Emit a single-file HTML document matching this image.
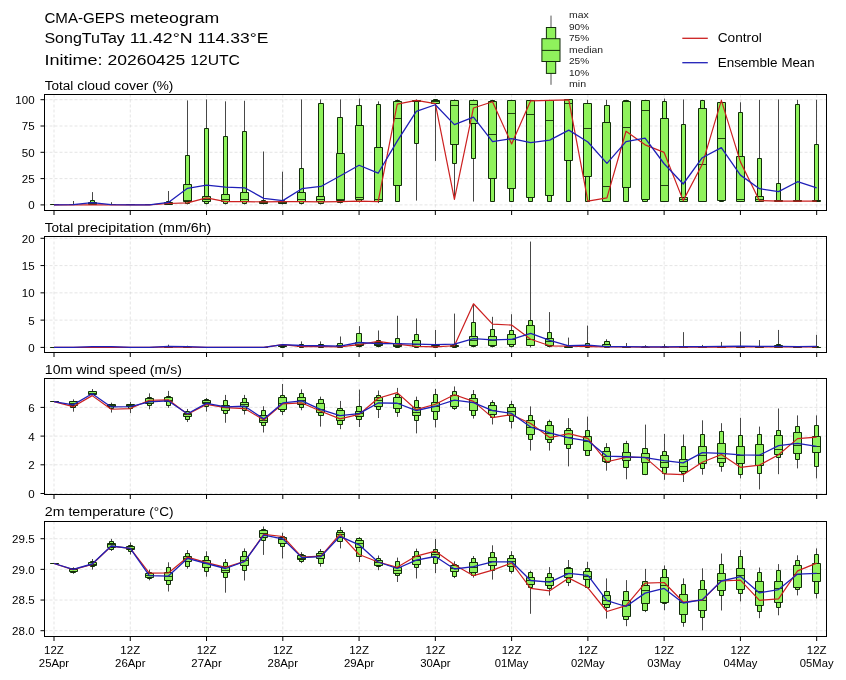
<!DOCTYPE html>
<html><head><meta charset="utf-8"><style>
html,body{margin:0;padding:0;background:#fff;width:846px;height:680px;overflow:hidden}
svg{display:block;font-family:'Liberation Sans', sans-serif;will-change:transform}
</style></head><body>
<svg width="846" height="680" viewBox="0 0 846 680">
<rect width="846" height="680" fill="#fff"/>
<text x="44.4" y="22.6" font-size="15.3" textLength="80.55" lengthAdjust="spacingAndGlyphs" fill="#000">CMA-GEPS</text><text x="129.82" y="22.6" font-size="15.3" textLength="89.37" lengthAdjust="spacingAndGlyphs" fill="#000">meteogram</text>
<text x="44.4" y="43.3" font-size="15.3" textLength="80.45" lengthAdjust="spacingAndGlyphs" fill="#000">SongTuTay</text><text x="129.71" y="43.3" font-size="15.3" textLength="62.9" lengthAdjust="spacingAndGlyphs" fill="#000">11.42°N</text><text x="197.47" y="43.3" font-size="15.3" textLength="70.85" lengthAdjust="spacingAndGlyphs" fill="#000">114.33°E</text>
<text x="44.4" y="64.6" font-size="15.3" textLength="58.18" lengthAdjust="spacingAndGlyphs" fill="#000">Initime:</text><text x="107.44" y="64.6" font-size="15.3" textLength="77.88" lengthAdjust="spacingAndGlyphs" fill="#000">20260425</text><text x="190.18" y="64.6" font-size="15.3" textLength="49.8" lengthAdjust="spacingAndGlyphs" fill="#000">12UTC</text>
<line x1="551.0" y1="15.6" x2="551.0" y2="84.8" stroke="#555" stroke-width="1"/>
<rect x="546.4" y="27.5" width="9.3" height="45.9" fill="#8ff25c" stroke="#122d0a" stroke-width="1"/>
<rect x="541.9" y="38.7" width="18.1" height="22.8" fill="#8ff25c" stroke="#122d0a" stroke-width="1"/>
<line x1="541.9" y1="50.4" x2="560" y2="50.4" stroke="#122d0a" stroke-width="1"/>
<text x="569" y="18" font-size="9.61" textLength="19.76" lengthAdjust="spacingAndGlyphs" fill="#222">max</text>
<text x="569" y="29.5" font-size="9.61" textLength="20.16" lengthAdjust="spacingAndGlyphs" fill="#222">90%</text>
<text x="569" y="41" font-size="9.61" textLength="20.16" lengthAdjust="spacingAndGlyphs" fill="#222">75%</text>
<text x="569" y="52.5" font-size="9.61" textLength="34" lengthAdjust="spacingAndGlyphs" fill="#222">median</text>
<text x="569" y="64" font-size="9.61" textLength="20.16" lengthAdjust="spacingAndGlyphs" fill="#222">25%</text>
<text x="569" y="75.5" font-size="9.61" textLength="20.16" lengthAdjust="spacingAndGlyphs" fill="#222">10%</text>
<text x="569" y="87" font-size="9.61" textLength="17.1" lengthAdjust="spacingAndGlyphs" fill="#222">min</text>
<line x1="682.3" y1="38.3" x2="707.8" y2="38.3" stroke="#cc2020" stroke-width="1.3"/>
<line x1="682.3" y1="62.7" x2="707.8" y2="62.7" stroke="#1f1fb8" stroke-width="1.3"/>
<text x="717.7" y="42.3" font-size="12.93" textLength="44.1" lengthAdjust="spacingAndGlyphs" fill="#000">Control</text>
<text x="717.7" y="66.7" font-size="12.93" textLength="59.83" lengthAdjust="spacingAndGlyphs" fill="#000">Ensemble</text><text x="781.4" y="66.7" font-size="12.93" textLength="33.24" lengthAdjust="spacingAndGlyphs" fill="#000">Mean</text>
<text x="44.8" y="89.5" font-size="12.61" textLength="28.59" lengthAdjust="spacingAndGlyphs" fill="#000">Total</text><text x="77.28" y="89.5" font-size="12.61" textLength="33.15" lengthAdjust="spacingAndGlyphs" fill="#000">cloud</text><text x="114.31" y="89.5" font-size="12.61" textLength="34.03" lengthAdjust="spacingAndGlyphs" fill="#000">cover</text><text x="152.23" y="89.5" font-size="12.61" textLength="21.18" lengthAdjust="spacingAndGlyphs" fill="#000">(%)</text>
<path d="M54 94.5V210.5M130.27 94.5V210.5M206.54 94.5V210.5M282.8 94.5V210.5M359.07 94.5V210.5M435.34 94.5V210.5M511.61 94.5V210.5M587.88 94.5V210.5M664.14 94.5V210.5M740.41 94.5V210.5M816.68 94.5V210.5M44.5 204.9H826.5M44.5 178.6H826.5M44.5 152.3H826.5M44.5 126H826.5M44.5 99.7H826.5" stroke="#c4c4c4" stroke-width="0.6" stroke-dasharray="3,2" fill="none" opacity="0.75"/>
<path d="M73.5 201V204.9M92.5 192.1V204.9M111.5 202.2V204.9M168.5 191V204.9M187.5 100.4V204.42M206.5 99.46V204.42M225.5 101.35V204.42M244.5 100.78V204.42M263.5 151.47V204.42M282.5 171.7V204.42M301.5 99.46V204.42M320.5 99.46V204.42M340.5 99.46V203.48M359.5 98.51V202.53M378.5 101.35V203.1M397.5 99.46V201.96M416.5 99.46V200.64M435.5 99.46V160.92M454.5 99.46V199.31M473.5 99.46V201.58M492.5 99.83V201.96M511.5 99.83V201.96M530.5 99.83V201.96M549.5 99.83V201.96M568.5 99.83V201.96M587.5 99.83V201.96M606.5 99.83V201.96M626.5 99.83V201.96M645.5 99.83V201.96M664.5 98.51V201.96M683.5 99.46V201.96M702.5 99.83V201.96M721.5 99.83V201.96M740.5 102.29V201.96M759.5 99.83V201.96M778.5 99.46V201.96M797.5 99.83V201.96M816.5 99.83V201.96" stroke="#333" stroke-width="0.9" fill="none"/>
<path d="M51.5 204.5H56.5V204.5H51.5zM70.5 204.5H75.5V204.5H70.5zM90.5 200.5H94.5V204.5H90.5zM109.5 204.5H113.5V204.5H109.5zM128.5 204.5H132.5V204.5H128.5zM147.5 204.5H151.5V204.5H147.5zM166.5 201.5H170.5V204.5H166.5zM185.5 155.5H189.5V203.5H185.5zM204.5 128.5H208.5V203.5H204.5zM223.5 136.5H227.5V203.5H223.5zM242.5 131.5H246.5V203.5H242.5zM261.5 200.5H265.5V203.5H261.5zM280.5 200.5H284.5V203.5H280.5zM299.5 168.5H303.5V203.5H299.5zM318.5 103.5H323.5V203.5H318.5zM337.5 117.5H342.5V202.5H337.5zM356.5 105.5H361.5V201.5H356.5zM376.5 104.5H380.5V201.5H376.5zM395.5 100.5H399.5V201.5H395.5zM414.5 100.5H418.5V143.5H414.5zM433.5 99.5H437.5V103.5H433.5zM452.5 100.5H456.5V163.5H452.5zM471.5 100.5H475.5V158.5H471.5zM490.5 100.5H494.5V201.5H490.5zM509.5 100.5H513.5V201.5H509.5zM528.5 100.5H532.5V201.5H528.5zM547.5 100.5H551.5V201.5H547.5zM566.5 99.5H570.5V201.5H566.5zM585.5 103.5H589.5V201.5H585.5zM604.5 105.5H609.5V201.5H604.5zM623.5 100.5H628.5V201.5H623.5zM642.5 100.5H647.5V201.5H642.5zM662.5 101.5H666.5V201.5H662.5zM681.5 124.5H685.5V201.5H681.5zM700.5 100.5H704.5V201.5H700.5zM719.5 102.5H723.5V201.5H719.5zM738.5 112.5H742.5V201.5H738.5zM757.5 158.5H761.5V201.5H757.5zM776.5 183.5H780.5V201.5H776.5zM795.5 104.5H799.5V201.5H795.5zM814.5 144.5H818.5V201.5H814.5z" fill="#8ff25c" stroke="#122d0a" stroke-width="1"/>
<path d="M50.5 204.5H58.5V204.5H50.5zM69.5 204.5H77.5V204.5H69.5zM88.5 202.5H96.5V204.5H88.5zM107.5 204.5H115.5V204.5H107.5zM126.5 204.5H134.5V204.5H126.5zM145.5 204.5H153.5V204.5H145.5zM164.5 202.5H172.5V204.5H164.5zM183.5 184.5H191.5V201.5H183.5zM202.5 196.5H210.5V201.5H202.5zM221.5 194.5H229.5V201.5H221.5zM240.5 192.5H248.5V201.5H240.5zM259.5 201.5H267.5V203.5H259.5zM278.5 201.5H286.5V203.5H278.5zM297.5 192.5H305.5V201.5H297.5zM316.5 196.5H324.5V201.5H316.5zM336.5 153.5H344.5V200.5H336.5zM355.5 125.5H363.5V199.5H355.5zM374.5 147.5H382.5V201.5H374.5zM393.5 101.5H401.5V185.5H393.5zM412.5 100.5H420.5V101.5H412.5zM431.5 100.5H439.5V103.5H431.5zM450.5 100.5H458.5V144.5H450.5zM469.5 100.5H477.5V123.5H469.5zM488.5 101.5H496.5V178.5H488.5zM507.5 100.5H515.5V188.5H507.5zM526.5 100.5H534.5V197.5H526.5zM545.5 100.5H553.5V195.5H545.5zM564.5 99.5H572.5V160.5H564.5zM583.5 103.5H591.5V176.5H583.5zM602.5 122.5H610.5V201.5H602.5zM622.5 101.5H630.5V187.5H622.5zM641.5 100.5H649.5V199.5H641.5zM660.5 118.5H668.5V201.5H660.5zM679.5 197.5H687.5V201.5H679.5zM698.5 108.5H706.5V201.5H698.5zM717.5 102.5H725.5V200.5H717.5zM736.5 156.5H744.5V201.5H736.5zM755.5 196.5H763.5V201.5H755.5zM774.5 200.5H782.5V201.5H774.5zM793.5 200.5H801.5V201.5H793.5zM812.5 200.5H820.5V201.5H812.5z" fill="#8ff25c" stroke="#122d0a" stroke-width="1"/>
<path d="M50.5 204.5H58.5M69.5 204.5H77.5M88.5 203.5H96.5M107.5 204.5H115.5M126.5 204.5H134.5M145.5 204.5H153.5M164.5 203.5H172.5M183.5 200.5H191.5M202.5 199.5H210.5M221.5 199.5H229.5M240.5 199.5H248.5M259.5 202.5H267.5M278.5 202.5H286.5M297.5 199.5H305.5M316.5 199.5H324.5M336.5 199.5H344.5M355.5 197.5H363.5M374.5 199.5H382.5M393.5 118.5H401.5M412.5 101.5H420.5M431.5 101.5H439.5M450.5 105.5H458.5M469.5 104.5H477.5M488.5 134.5H496.5M507.5 113.5H515.5M526.5 114.5H534.5M545.5 120.5H553.5M564.5 103.5H572.5M583.5 128.5H591.5M602.5 186.5H610.5M622.5 127.5H630.5M641.5 110.5H649.5M660.5 185.5H668.5M679.5 199.5H687.5M698.5 164.5H706.5M717.5 138.5H725.5M736.5 199.5H744.5M755.5 199.5H763.5M774.5 200.5H782.5M793.5 200.5H801.5M812.5 200.5H820.5" stroke="#122d0a" stroke-width="0.9" fill="none"/>
<path d="M54 204.9L73.07 204.9L92.13 204.9L111.2 204.9L130.27 204.9L149.34 204.9L168.4 203.5L187.47 202.91L206.54 197.8L225.6 201.58L244.67 201.58L263.74 201.96L282.8 201.58L301.87 201.58L320.94 201.96L340 201.58L359.07 201.21L378.14 201.58L397.21 104.18L416.27 100.4L435.34 103.62L454.41 199.31L473.47 107.97L492.54 101.73L511.61 143.9L530.67 100.78L549.74 100.4L568.81 99.83L587.88 201.21L606.94 197.8L626.01 131.23L645.08 144.85L664.14 152.41L683.21 200.64L702.28 164.33L721.35 100.4L740.41 161.87L759.48 200.64L778.55 201.21L797.61 201.21L816.68 201.21" stroke="#cc2020" stroke-width="1.2" fill="none" stroke-linejoin="round"/>
<path d="M54 204.9L73.07 204.6L92.13 202.7L111.2 204.6L130.27 204.9L149.34 204.9L168.4 202.4L187.47 188.35L206.54 185.13L225.6 187.21L244.67 187.78L263.74 198.37L282.8 200.64L301.87 188.72L320.94 186.45L340 176.05L359.07 165.27L378.14 173.22L397.21 141.06L416.27 111.37L435.34 104.75L454.41 124.61L473.47 117.04L492.54 141.63L511.61 138.61L530.67 142.58L549.74 140.12L568.81 130.09L587.88 142.01L606.94 163.38L626.01 141.63L645.08 138.23L664.14 163.76L683.21 184L702.28 157.71L721.35 147.68L740.41 175.11L759.48 188.72L778.55 191.56L797.61 181.73L816.68 187.78" stroke="#1f1fb8" stroke-width="1.3" fill="none" stroke-linejoin="round"/>
<rect x="44.5" y="94.5" width="782" height="116" fill="none" stroke="#000" stroke-width="1"/>
<path d="M40.5 204.9H44.5M40.5 178.6H44.5M40.5 152.3H44.5M40.5 126H44.5M40.5 99.7H44.5M54 210.5v4.5M130.27 210.5v4.5M206.54 210.5v4.5M282.8 210.5v4.5M359.07 210.5v4.5M435.34 210.5v4.5M511.61 210.5v4.5M587.88 210.5v4.5M664.14 210.5v4.5M740.41 210.5v4.5M816.68 210.5v4.5" stroke="#000" stroke-width="1" fill="none"/>
<text x="28.17" y="209.3" font-size="10.71" textLength="6.43" lengthAdjust="spacingAndGlyphs" fill="#000">0</text>
<text x="21.75" y="183" font-size="10.71" textLength="12.85" lengthAdjust="spacingAndGlyphs" fill="#000">25</text>
<text x="21.75" y="156.7" font-size="10.71" textLength="12.85" lengthAdjust="spacingAndGlyphs" fill="#000">50</text>
<text x="21.75" y="130.4" font-size="10.71" textLength="12.85" lengthAdjust="spacingAndGlyphs" fill="#000">75</text>
<text x="15.32" y="104.1" font-size="10.71" textLength="19.28" lengthAdjust="spacingAndGlyphs" fill="#000">100</text>
<text x="44.8" y="231.8" font-size="12.61" textLength="28.59" lengthAdjust="spacingAndGlyphs" fill="#000">Total</text><text x="77.28" y="231.8" font-size="12.61" textLength="77.11" lengthAdjust="spacingAndGlyphs" fill="#000">precipitation</text><text x="158.28" y="231.8" font-size="12.61" textLength="53.06" lengthAdjust="spacingAndGlyphs" fill="#000">(mm/6h)</text>
<path d="M54 236.5V352.5M130.27 236.5V352.5M206.54 236.5V352.5M282.8 236.5V352.5M359.07 236.5V352.5M435.34 236.5V352.5M511.61 236.5V352.5M587.88 236.5V352.5M664.14 236.5V352.5M740.41 236.5V352.5M816.68 236.5V352.5M44.5 347.4H826.5M44.5 320.12H826.5M44.5 292.85H826.5M44.5 265.57H826.5M44.5 238.3H826.5" stroke="#c4c4c4" stroke-width="0.6" stroke-dasharray="3,2" fill="none" opacity="0.75"/>
<path d="M92.5 346.31V347.4M111.5 346.31V347.4M168.5 344.67V347.4M187.5 345.76V347.4M282.5 344.13V347.4M301.5 341.4V347.4M320.5 341.4V347.4M340.5 336.49V347.4M359.5 326.13V347.4M378.5 330.49V347.4M397.5 315.76V347.4M416.5 318.49V347.4M435.5 329.94V347.4M454.5 313.58V347.4M473.5 304.85V347.4M492.5 316.82V347.4M511.5 314.22V347.4M530.5 241.57V347.4M549.5 312.09V347.4M568.5 337.58V347.4M587.5 325.58V347.4M606.5 339.22V347.4M626.5 343.04V347.4M645.5 345.22V347.4M664.5 344.13V347.4M683.5 332.13V347.4M702.5 344.95V347.4M721.5 341.94V347.4M740.5 331.58V347.4M759.5 340.04V347.4M778.5 329.94V347.4M797.5 346.31V347.4M816.5 334.85V347.4" stroke="#333" stroke-width="0.9" fill="none"/>
<path d="M51.5 347.5H56.5V347.5H51.5zM70.5 347.5H75.5V347.5H70.5zM90.5 347.5H94.5V347.5H90.5zM109.5 347.5H113.5V347.5H109.5zM128.5 347.5H132.5V347.5H128.5zM147.5 347.5H151.5V347.5H147.5zM166.5 346.5H170.5V347.5H166.5zM185.5 346.5H189.5V347.5H185.5zM204.5 347.5H208.5V347.5H204.5zM223.5 347.5H227.5V347.5H223.5zM242.5 347.5H246.5V347.5H242.5zM261.5 347.5H265.5V347.5H261.5zM280.5 345.5H284.5V347.5H280.5zM299.5 344.5H303.5V347.5H299.5zM318.5 344.5H323.5V347.5H318.5zM337.5 343.5H342.5V347.5H337.5zM356.5 333.5H361.5V346.5H356.5zM376.5 340.5H380.5V346.5H376.5zM395.5 338.5H399.5V347.5H395.5zM414.5 334.5H418.5V347.5H414.5zM433.5 344.5H437.5V347.5H433.5zM452.5 344.5H456.5V347.5H452.5zM471.5 322.5H475.5V346.5H471.5zM490.5 329.5H494.5V346.5H490.5zM509.5 330.5H513.5V346.5H509.5zM528.5 320.5H532.5V345.5H528.5zM547.5 332.5H551.5V346.5H547.5zM566.5 345.5H570.5V347.5H566.5zM585.5 343.5H589.5V347.5H585.5zM604.5 341.5H609.5V347.5H604.5zM623.5 346.5H628.5V347.5H623.5zM642.5 346.5H647.5V347.5H642.5zM662.5 346.5H666.5V347.5H662.5zM681.5 346.5H685.5V347.5H681.5zM700.5 346.5H704.5V347.5H700.5zM719.5 346.5H723.5V347.5H719.5zM738.5 346.5H742.5V347.5H738.5zM757.5 346.5H761.5V347.5H757.5zM776.5 344.5H780.5V347.5H776.5zM795.5 347.5H799.5V347.5H795.5zM814.5 346.5H818.5V347.5H814.5z" fill="#8ff25c" stroke="#122d0a" stroke-width="1"/>
<path d="M50.5 347.5H58.5V347.5H50.5zM69.5 347.5H77.5V347.5H69.5zM88.5 347.5H96.5V347.5H88.5zM107.5 347.5H115.5V347.5H107.5zM126.5 347.5H134.5V347.5H126.5zM145.5 347.5H153.5V347.5H145.5zM164.5 347.5H172.5V347.5H164.5zM183.5 347.5H191.5V347.5H183.5zM202.5 347.5H210.5V347.5H202.5zM221.5 347.5H229.5V347.5H221.5zM240.5 347.5H248.5V347.5H240.5zM259.5 347.5H267.5V347.5H259.5zM278.5 345.5H286.5V346.5H278.5zM297.5 345.5H305.5V346.5H297.5zM316.5 345.5H324.5V346.5H316.5zM336.5 345.5H344.5V346.5H336.5zM355.5 342.5H363.5V345.5H355.5zM374.5 342.5H382.5V345.5H374.5zM393.5 343.5H401.5V346.5H393.5zM412.5 340.5H420.5V346.5H412.5zM431.5 345.5H439.5V346.5H431.5zM450.5 345.5H458.5V346.5H450.5zM469.5 336.5H477.5V345.5H469.5zM488.5 336.5H496.5V345.5H488.5zM507.5 334.5H515.5V344.5H507.5zM526.5 325.5H534.5V345.5H526.5zM545.5 338.5H553.5V345.5H545.5zM564.5 346.5H572.5V347.5H564.5zM583.5 345.5H591.5V346.5H583.5zM602.5 344.5H610.5V346.5H602.5zM622.5 346.5H630.5V347.5H622.5zM641.5 347.5H649.5V347.5H641.5zM660.5 347.5H668.5V347.5H660.5zM679.5 346.5H687.5V347.5H679.5zM698.5 347.5H706.5V347.5H698.5zM717.5 347.5H725.5V347.5H717.5zM736.5 346.5H744.5V347.5H736.5zM755.5 347.5H763.5V347.5H755.5zM774.5 345.5H782.5V347.5H774.5zM793.5 347.5H801.5V347.5H793.5zM812.5 347.5H820.5V347.5H812.5z" fill="#8ff25c" stroke="#122d0a" stroke-width="1"/>
<path d="M50.5 347.5H58.5M69.5 347.5H77.5M88.5 347.5H96.5M107.5 347.5H115.5M126.5 347.5H134.5M145.5 347.5H153.5M164.5 347.5H172.5M183.5 347.5H191.5M202.5 347.5H210.5M221.5 347.5H229.5M240.5 347.5H248.5M259.5 347.5H267.5M278.5 346.5H286.5M297.5 346.5H305.5M316.5 346.5H324.5M336.5 346.5H344.5M355.5 344.5H363.5M374.5 344.5H382.5M393.5 345.5H401.5M412.5 344.5H420.5M431.5 346.5H439.5M450.5 346.5H458.5M469.5 340.5H477.5M488.5 340.5H496.5M507.5 339.5H515.5M526.5 339.5H534.5M545.5 341.5H553.5M564.5 346.5H572.5M583.5 346.5H591.5M602.5 346.5H610.5M622.5 347.5H630.5M641.5 347.5H649.5M660.5 347.5H668.5M679.5 347.5H687.5M698.5 347.5H706.5M717.5 347.5H725.5M736.5 347.5H744.5M755.5 347.5H763.5M774.5 346.5H782.5M793.5 347.5H801.5M812.5 347.5H820.5" stroke="#122d0a" stroke-width="0.9" fill="none"/>
<path d="M54 347.4L73.07 347.4L92.13 347.4L111.2 347.13L130.27 347.4L149.34 347.4L168.4 346.85L187.47 347.13L206.54 347.4L225.6 347.4L244.67 347.4L263.74 347.4L282.8 344.67L301.87 346.58L320.94 346.58L340 346.85L359.07 344.67L378.14 341.4L397.21 344.13L416.27 346.31L435.34 346.85L454.41 345.76L473.47 303.76L492.54 324.15L511.61 325.09L530.67 339.28L549.74 345.78L568.81 346.09L587.88 346.64L606.94 346.85L626.01 346.85L645.08 347.13L664.14 347.13L683.21 347.13L702.28 347.13L721.35 347.13L740.41 346.85L759.48 346.85L778.55 346.85L797.61 346.85L816.68 346.85" stroke="#cc2020" stroke-width="1.2" fill="none" stroke-linejoin="round"/>
<path d="M54 347.4L73.07 347.4L92.13 346.58L111.2 346.58L130.27 347.4L149.34 347.4L168.4 346.31L187.47 346.58L206.54 347.4L225.6 347.4L244.67 347.4L263.74 347.4L282.8 344.67L301.87 345.49L320.94 345.76L340 346.04L359.07 342.49L378.14 343.58L397.21 343.58L416.27 344.13L435.34 344.67L454.41 344.13L473.47 338.69L492.54 339.87L511.61 339.28L530.67 333.37L549.74 340.46L568.81 345.76L587.88 345.22L606.94 346.58L626.01 346.58L645.08 346.85L664.14 346.85L683.21 346.58L702.28 346.58L721.35 346.31L740.41 346.04L759.48 346.31L778.55 346.31L797.61 346.58L816.68 346.31" stroke="#1f1fb8" stroke-width="1.3" fill="none" stroke-linejoin="round"/>
<rect x="44.5" y="236.5" width="782" height="116" fill="none" stroke="#000" stroke-width="1"/>
<path d="M40.5 347.4H44.5M40.5 320.12H44.5M40.5 292.85H44.5M40.5 265.57H44.5M40.5 238.3H44.5M54 352.5v4.5M130.27 352.5v4.5M206.54 352.5v4.5M282.8 352.5v4.5M359.07 352.5v4.5M435.34 352.5v4.5M511.61 352.5v4.5M587.88 352.5v4.5M664.14 352.5v4.5M740.41 352.5v4.5M816.68 352.5v4.5" stroke="#000" stroke-width="1" fill="none"/>
<text x="28.17" y="351.8" font-size="10.71" textLength="6.43" lengthAdjust="spacingAndGlyphs" fill="#000">0</text>
<text x="28.17" y="324.52" font-size="10.71" textLength="6.43" lengthAdjust="spacingAndGlyphs" fill="#000">5</text>
<text x="21.75" y="297.25" font-size="10.71" textLength="12.85" lengthAdjust="spacingAndGlyphs" fill="#000">10</text>
<text x="21.75" y="269.97" font-size="10.71" textLength="12.85" lengthAdjust="spacingAndGlyphs" fill="#000">15</text>
<text x="21.75" y="242.7" font-size="10.71" textLength="12.85" lengthAdjust="spacingAndGlyphs" fill="#000">20</text>
<text x="44.8" y="374.1" font-size="12.61" textLength="27.5" lengthAdjust="spacingAndGlyphs" fill="#000">10m</text><text x="76.19" y="374.1" font-size="12.61" textLength="28.94" lengthAdjust="spacingAndGlyphs" fill="#000">wind</text><text x="109.02" y="374.1" font-size="12.61" textLength="36.98" lengthAdjust="spacingAndGlyphs" fill="#000">speed</text><text x="149.89" y="374.1" font-size="12.61" textLength="31.97" lengthAdjust="spacingAndGlyphs" fill="#000">(m/s)</text>
<path d="M54 378.5V494.5M130.27 378.5V494.5M206.54 378.5V494.5M282.8 378.5V494.5M359.07 378.5V494.5M435.34 378.5V494.5M511.61 378.5V494.5M587.88 378.5V494.5M664.14 378.5V494.5M740.41 378.5V494.5M816.68 378.5V494.5M44.5 493.5H826.5M44.5 464.8H826.5M44.5 436.1H826.5M44.5 407.4H826.5" stroke="#c4c4c4" stroke-width="0.6" stroke-dasharray="3,2" fill="none" opacity="0.75"/>
<path d="M73.5 399.36V411.7M92.5 389.03V395.2M111.5 402.66V412.57M130.5 401.95V413.14M149.5 393.34V409.27M168.5 390.9V407.83M187.5 408.98V422.04M206.5 397.93V411.56M225.5 394.92V422.75M244.5 394.92V414.57M263.5 406.25V432.51M282.5 384.01V415.01M301.5 389.32V410.27M320.5 396.64V426.63M340.5 400.94V429.21M359.5 389.61V427.06M378.5 390.47V418.02M397.5 387.88V416.87M416.5 396.64V433.37M435.5 388.89V427.49M454.5 386.45V409.98M473.5 390.04V418.59M492.5 400.23V424.48M511.5 400.8V428.49M530.5 406.4V450.59M549.5 419.6V450.59M568.5 418.16V466.38M587.5 416.58V455.47M606.5 443.13V470.68M626.5 440.84V479.29M645.5 424.62V475.13M664.5 433.9V479.8M683.5 434.5V482M702.5 420.3V474.7M721.5 423.2V471.7M740.5 417.8V478.4M759.5 426.6V489.4M778.5 408.5V474.2M797.5 415.4V468.4M816.5 415.4V478.4" stroke="#333" stroke-width="0.9" fill="none"/>
<path d="M51.5 401.5H56.5V401.5H51.5zM70.5 401.5H75.5V407.5H70.5zM90.5 391.5H94.5V394.5H90.5zM109.5 404.5H113.5V408.5H109.5zM128.5 404.5H132.5V408.5H128.5zM147.5 397.5H151.5V405.5H147.5zM166.5 396.5H170.5V405.5H166.5zM185.5 411.5H189.5V419.5H185.5zM204.5 399.5H208.5V406.5H204.5zM223.5 400.5H227.5V413.5H223.5zM242.5 398.5H246.5V410.5H242.5zM261.5 410.5H265.5V425.5H261.5zM280.5 395.5H284.5V411.5H280.5zM299.5 393.5H303.5V407.5H299.5zM318.5 399.5H323.5V415.5H318.5zM337.5 408.5H342.5V424.5H337.5zM356.5 406.5H361.5V419.5H356.5zM376.5 395.5H380.5V409.5H376.5zM395.5 394.5H399.5V412.5H395.5zM414.5 400.5H418.5V420.5H414.5zM433.5 394.5H437.5V419.5H433.5zM452.5 391.5H456.5V408.5H452.5zM471.5 394.5H475.5V415.5H471.5zM490.5 402.5H494.5V417.5H490.5zM509.5 404.5H513.5V421.5H509.5zM528.5 415.5H532.5V439.5H528.5zM547.5 421.5H551.5V442.5H547.5zM566.5 428.5H570.5V448.5H566.5zM585.5 430.5H589.5V455.5H585.5zM604.5 447.5H609.5V462.5H604.5zM623.5 443.5H628.5V467.5H623.5zM642.5 448.5H647.5V474.5H642.5zM662.5 451.5H666.5V473.5H662.5zM681.5 446.5H685.5V473.5H681.5zM700.5 434.5H704.5V468.5H700.5zM719.5 431.5H723.5V466.5H719.5zM738.5 435.5H742.5V474.5H738.5zM757.5 434.5H761.5V473.5H757.5zM776.5 430.5H780.5V457.5H776.5zM795.5 426.5H799.5V459.5H795.5zM814.5 425.5H818.5V466.5H814.5z" fill="#8ff25c" stroke="#122d0a" stroke-width="1"/>
<path d="M50.5 401.5H58.5V401.5H50.5zM69.5 401.5H77.5V405.5H69.5zM88.5 391.5H96.5V394.5H88.5zM107.5 404.5H115.5V406.5H107.5zM126.5 404.5H134.5V406.5H126.5zM145.5 398.5H153.5V403.5H145.5zM164.5 397.5H172.5V401.5H164.5zM183.5 413.5H191.5V416.5H183.5zM202.5 400.5H210.5V403.5H202.5zM221.5 405.5H229.5V410.5H221.5zM240.5 402.5H248.5V406.5H240.5zM259.5 415.5H267.5V422.5H259.5zM278.5 397.5H286.5V409.5H278.5zM297.5 397.5H305.5V404.5H297.5zM316.5 403.5H324.5V412.5H316.5zM336.5 410.5H344.5V420.5H336.5zM355.5 411.5H363.5V416.5H355.5zM374.5 397.5H382.5V406.5H374.5zM393.5 397.5H401.5V408.5H393.5zM412.5 407.5H420.5V415.5H412.5zM431.5 402.5H439.5V411.5H431.5zM450.5 395.5H458.5V406.5H450.5zM469.5 398.5H477.5V410.5H469.5zM488.5 405.5H496.5V414.5H488.5zM507.5 407.5H515.5V415.5H507.5zM526.5 420.5H534.5V434.5H526.5zM545.5 425.5H553.5V439.5H545.5zM564.5 430.5H572.5V444.5H564.5zM583.5 436.5H591.5V450.5H583.5zM602.5 451.5H610.5V461.5H602.5zM622.5 452.5H630.5V460.5H622.5zM641.5 453.5H649.5V462.5H641.5zM660.5 455.5H668.5V467.5H660.5zM679.5 459.5H687.5V471.5H679.5zM698.5 446.5H706.5V463.5H698.5zM717.5 443.5H725.5V462.5H717.5zM736.5 446.5H744.5V463.5H736.5zM755.5 444.5H763.5V465.5H755.5zM774.5 435.5H782.5V454.5H774.5zM793.5 432.5H801.5V453.5H793.5zM812.5 436.5H820.5V452.5H812.5z" fill="#8ff25c" stroke="#122d0a" stroke-width="1"/>
<path d="M50.5 401.5H58.5M69.5 403.5H77.5M88.5 393.5H96.5M107.5 405.5H115.5M126.5 405.5H134.5M145.5 401.5H153.5M164.5 400.5H172.5M183.5 414.5H191.5M202.5 402.5H210.5M221.5 407.5H229.5M240.5 404.5H248.5M259.5 420.5H267.5M278.5 403.5H286.5M297.5 400.5H305.5M316.5 409.5H324.5M336.5 415.5H344.5M355.5 413.5H363.5M374.5 400.5H382.5M393.5 403.5H401.5M412.5 412.5H420.5M431.5 406.5H439.5M450.5 400.5H458.5M469.5 402.5H477.5M488.5 410.5H496.5M507.5 411.5H515.5M526.5 427.5H534.5M545.5 433.5H553.5M564.5 437.5H572.5M583.5 441.5H591.5M602.5 456.5H610.5M622.5 457.5H630.5M641.5 457.5H649.5M660.5 462.5H668.5M679.5 466.5H687.5M698.5 455.5H706.5M717.5 458.5H725.5M736.5 455.5H744.5M755.5 455.5H763.5M774.5 449.5H782.5M793.5 445.5H801.5M812.5 446.5H820.5" stroke="#122d0a" stroke-width="0.9" fill="none"/>
<path d="M54 401.66L73.07 406.68L92.13 395.63L111.2 409.27L130.27 408.55L149.34 400.23L168.4 399.79L187.47 414.29L206.54 404.39L225.6 407.69L244.67 408.55L263.74 420.03L282.8 403.81L301.87 402.95L320.94 411.27L340 418.88L359.07 414.43L378.14 398.22L397.21 392.62L416.27 409.7L435.34 404.24L454.41 394.77L473.47 401.37L492.54 417.59L511.61 414.72L530.67 423.47L549.74 437.54L568.81 433.66L587.88 438.4L606.94 461.79L626.01 457.34L645.08 457.34L664.14 473.9L683.21 474.7L702.28 462.2L721.35 454.5L740.41 467.3L759.48 465.1L778.55 454.8L797.61 438.6L816.68 437.2" stroke="#cc2020" stroke-width="1.2" fill="none" stroke-linejoin="round"/>
<path d="M54 401.66L73.07 404.82L92.13 393.77L111.2 406.97L130.27 406.68L149.34 401.95L168.4 400.94L187.47 413.71L206.54 403.38L225.6 406.97L244.67 406.25L263.74 418.88L282.8 402.95L301.87 400.8L320.94 409.7L340 415.58L359.07 413.57L378.14 402.95L397.21 403.24L416.27 410.56L435.34 406.25L454.41 400.23L473.47 402.66L492.54 410.56L511.61 413.43L530.67 427.06L549.74 432.94L568.81 437.97L587.88 440.84L606.94 456.19L626.01 456.76L645.08 457.62L664.14 460.7L683.21 462.9L702.28 452.6L721.35 453.4L740.41 454.8L759.48 455.1L778.55 445.7L797.61 443.4L816.68 446.3" stroke="#1f1fb8" stroke-width="1.3" fill="none" stroke-linejoin="round"/>
<rect x="44.5" y="378.5" width="782" height="116" fill="none" stroke="#000" stroke-width="1"/>
<path d="M40.5 493.5H44.5M40.5 464.8H44.5M40.5 436.1H44.5M40.5 407.4H44.5M54 494.5v4.5M130.27 494.5v4.5M206.54 494.5v4.5M282.8 494.5v4.5M359.07 494.5v4.5M435.34 494.5v4.5M511.61 494.5v4.5M587.88 494.5v4.5M664.14 494.5v4.5M740.41 494.5v4.5M816.68 494.5v4.5" stroke="#000" stroke-width="1" fill="none"/>
<text x="28.17" y="497.9" font-size="10.71" textLength="6.43" lengthAdjust="spacingAndGlyphs" fill="#000">0</text>
<text x="28.17" y="469.2" font-size="10.71" textLength="6.43" lengthAdjust="spacingAndGlyphs" fill="#000">2</text>
<text x="28.17" y="440.5" font-size="10.71" textLength="6.43" lengthAdjust="spacingAndGlyphs" fill="#000">4</text>
<text x="28.17" y="411.8" font-size="10.71" textLength="6.43" lengthAdjust="spacingAndGlyphs" fill="#000">6</text>
<text x="44.8" y="516.4" font-size="12.61" textLength="19.71" lengthAdjust="spacingAndGlyphs" fill="#000">2m</text><text x="68.4" y="516.4" font-size="12.61" textLength="76.94" lengthAdjust="spacingAndGlyphs" fill="#000">temperature</text><text x="149.23" y="516.4" font-size="12.61" textLength="24.22" lengthAdjust="spacingAndGlyphs" fill="#000">(°C)</text>
<path d="M54 521.5V636.5M130.27 521.5V636.5M206.54 521.5V636.5M282.8 521.5V636.5M359.07 521.5V636.5M435.34 521.5V636.5M511.61 521.5V636.5M587.88 521.5V636.5M664.14 521.5V636.5M740.41 521.5V636.5M816.68 521.5V636.5M44.5 630.7H826.5M44.5 600.04H826.5M44.5 569.37H826.5M44.5 538.71H826.5" stroke="#c4c4c4" stroke-width="0.6" stroke-dasharray="3,2" fill="none" opacity="0.75"/>
<path d="M73.5 567.3V573.8M92.5 559V569.6M111.5 538.9V551M130.5 542.5V554.5M149.5 569.6V580.3M168.5 562.3V591.5M187.5 550.1V568.7M206.5 551.3V576.7M225.5 559V592.7M244.5 548.4V580.5M263.5 526.5V554.9M282.5 532.8V558.4M301.5 552.2V563.1M320.5 549V566.7M340.5 527.1V548.4M359.5 537.1V562M378.5 555.5V570.2M397.5 557.6V582M416.5 548.6V578.5M435.5 539.1V573.1M454.5 561.3V578.1M473.5 556V577.6M492.5 545.3V579.6M511.5 551.2V573.6M530.5 570.7V613.8M549.5 567.1V595.5M568.5 560V586.1M587.5 561.8V588.4M606.5 578.4V618.6M626.5 580.1V626.2M645.5 568.9V612.1M664.5 565.4V610.3M683.5 578.4V626.8M702.5 568.3V630.4M721.5 553.5V610.5M740.5 550V601.4M759.5 567.5V618.2M778.5 564.1V615.3M797.5 555.3V595.4M816.5 548.4V598.4" stroke="#333" stroke-width="0.9" fill="none"/>
<path d="M51.5 563.5H56.5V563.5H51.5zM70.5 568.5H75.5V572.5H70.5zM90.5 561.5H94.5V566.5H90.5zM109.5 541.5H113.5V549.5H109.5zM128.5 545.5H132.5V551.5H128.5zM147.5 572.5H151.5V578.5H147.5zM166.5 567.5H170.5V584.5H166.5zM185.5 553.5H189.5V566.5H185.5zM204.5 556.5H208.5V571.5H204.5zM223.5 562.5H227.5V577.5H223.5zM242.5 551.5H246.5V570.5H242.5zM261.5 529.5H265.5V540.5H261.5zM280.5 536.5H284.5V546.5H280.5zM299.5 554.5H303.5V561.5H299.5zM318.5 551.5H323.5V563.5H318.5zM337.5 530.5H342.5V541.5H337.5zM356.5 538.5H361.5V556.5H356.5zM376.5 558.5H380.5V566.5H376.5zM395.5 561.5H399.5V575.5H395.5zM414.5 551.5H418.5V567.5H414.5zM433.5 549.5H437.5V563.5H433.5zM452.5 564.5H456.5V576.5H452.5zM471.5 558.5H475.5V575.5H471.5zM490.5 552.5H494.5V570.5H490.5zM509.5 555.5H513.5V571.5H509.5zM528.5 572.5H532.5V587.5H528.5zM547.5 573.5H551.5V588.5H547.5zM566.5 567.5H570.5V582.5H566.5zM585.5 568.5H589.5V587.5H585.5zM604.5 591.5H609.5V607.5H604.5zM623.5 591.5H628.5V619.5H623.5zM642.5 581.5H647.5V610.5H642.5zM662.5 569.5H666.5V603.5H662.5zM681.5 584.5H685.5V622.5H681.5zM700.5 580.5H704.5V617.5H700.5zM719.5 564.5H723.5V595.5H719.5zM738.5 556.5H742.5V593.5H738.5zM757.5 572.5H761.5V611.5H757.5zM776.5 570.5H780.5V607.5H776.5zM795.5 560.5H799.5V589.5H795.5zM814.5 554.5H818.5V593.5H814.5z" fill="#8ff25c" stroke="#122d0a" stroke-width="1"/>
<path d="M50.5 563.5H58.5V563.5H50.5zM69.5 569.5H77.5V571.5H69.5zM88.5 562.5H96.5V565.5H88.5zM107.5 543.5H115.5V547.5H107.5zM126.5 546.5H134.5V549.5H126.5zM145.5 573.5H153.5V577.5H145.5zM164.5 572.5H172.5V580.5H164.5zM183.5 556.5H191.5V561.5H183.5zM202.5 560.5H210.5V567.5H202.5zM221.5 566.5H229.5V572.5H221.5zM240.5 556.5H248.5V565.5H240.5zM259.5 530.5H267.5V537.5H259.5zM278.5 537.5H286.5V543.5H278.5zM297.5 555.5H305.5V559.5H297.5zM316.5 553.5H324.5V558.5H316.5zM336.5 532.5H344.5V537.5H336.5zM355.5 540.5H363.5V547.5H355.5zM374.5 560.5H382.5V565.5H374.5zM393.5 567.5H401.5V573.5H393.5zM412.5 556.5H420.5V564.5H412.5zM431.5 552.5H439.5V557.5H431.5zM450.5 565.5H458.5V571.5H450.5zM469.5 562.5H477.5V572.5H469.5zM488.5 557.5H496.5V565.5H488.5zM507.5 558.5H515.5V566.5H507.5zM526.5 577.5H534.5V584.5H526.5zM545.5 577.5H553.5V585.5H545.5zM564.5 568.5H572.5V577.5H564.5zM583.5 571.5H591.5V579.5H583.5zM602.5 595.5H610.5V604.5H602.5zM622.5 600.5H630.5V616.5H622.5zM641.5 585.5H649.5V603.5H641.5zM660.5 577.5H668.5V602.5H660.5zM679.5 594.5H687.5V614.5H679.5zM698.5 589.5H706.5V610.5H698.5zM717.5 573.5H725.5V590.5H717.5zM736.5 568.5H744.5V589.5H736.5zM755.5 581.5H763.5V605.5H755.5zM774.5 581.5H782.5V602.5H774.5zM793.5 565.5H801.5V587.5H793.5zM812.5 563.5H820.5V581.5H812.5z" fill="#8ff25c" stroke="#122d0a" stroke-width="1"/>
<path d="M50.5 563.5H58.5M69.5 569.5H77.5M88.5 564.5H96.5M107.5 544.5H115.5M126.5 548.5H134.5M145.5 575.5H153.5M164.5 576.5H172.5M183.5 558.5H191.5M202.5 563.5H210.5M221.5 570.5H229.5M240.5 560.5H248.5M259.5 533.5H267.5M278.5 539.5H286.5M297.5 558.5H305.5M316.5 555.5H324.5M336.5 534.5H344.5M355.5 543.5H363.5M374.5 562.5H382.5M393.5 570.5H401.5M412.5 560.5H420.5M431.5 554.5H439.5M450.5 568.5H458.5M469.5 567.5H477.5M488.5 561.5H496.5M507.5 561.5H515.5M526.5 580.5H534.5M545.5 581.5H553.5M564.5 573.5H572.5M583.5 576.5H591.5M602.5 600.5H610.5M622.5 605.5H630.5M641.5 590.5H649.5M660.5 585.5H668.5M679.5 602.5H687.5M698.5 600.5H706.5M717.5 580.5H725.5M736.5 575.5H744.5M755.5 591.5H763.5M774.5 588.5H782.5M793.5 574.5H801.5M812.5 573.5H820.5" stroke="#122d0a" stroke-width="0.9" fill="none"/>
<path d="M54 563.5L73.07 569.6L92.13 564.3L111.2 546.2L130.27 548.4L149.34 573.2L168.4 573L187.47 557.2L206.54 562.6L225.6 567.3L244.67 561.4L263.74 534.4L282.8 536.5L301.87 557.2L320.94 556.1L340 534.2L359.07 554.5L378.14 562L397.21 567.3L416.27 556.1L435.34 551.2L454.41 564.8L473.47 575.7L492.54 570.1L511.61 563L530.67 588.4L549.74 590.8L568.81 578.1L587.88 587.8L606.94 611.5L626.01 605.6L645.08 583.1L664.14 582.5L683.21 602L702.28 600.2L721.35 581L740.41 580.1L759.48 600.3L778.55 598.8L797.61 570.9L816.68 563.1" stroke="#cc2020" stroke-width="1.2" fill="none" stroke-linejoin="round"/>
<path d="M54 563.5L73.07 569.4L92.13 564L111.2 546L130.27 548.4L149.34 575.6L168.4 576.1L187.47 558.4L206.54 563.5L225.6 568.5L244.67 561.4L263.74 535.1L282.8 538.9L301.87 557.6L320.94 556.6L340 536.3L359.07 544.8L378.14 562L397.21 568.5L416.27 560.2L435.34 556.5L454.41 569L473.47 566.6L492.54 561.9L511.61 561.8L530.67 580.5L549.74 582.2L568.81 573.4L587.88 575.4L606.94 600.6L626.01 606.5L645.08 593.1L664.14 588.4L683.21 603L702.28 599.6L721.35 581L740.41 576.6L759.48 592.9L778.55 589.6L797.61 574.1L816.68 573.4" stroke="#1f1fb8" stroke-width="1.3" fill="none" stroke-linejoin="round"/>
<rect x="44.5" y="521.5" width="782" height="115" fill="none" stroke="#000" stroke-width="1"/>
<path d="M40.5 630.7H44.5M40.5 600.04H44.5M40.5 569.37H44.5M40.5 538.71H44.5M54 636.5v4.5M130.27 636.5v4.5M206.54 636.5v4.5M282.8 636.5v4.5M359.07 636.5v4.5M435.34 636.5v4.5M511.61 636.5v4.5M587.88 636.5v4.5M664.14 636.5v4.5M740.41 636.5v4.5M816.68 636.5v4.5" stroke="#000" stroke-width="1" fill="none"/>
<text x="12.11" y="635.1" font-size="10.71" textLength="22.49" lengthAdjust="spacingAndGlyphs" fill="#000">28.0</text>
<text x="12.11" y="604.44" font-size="10.71" textLength="22.49" lengthAdjust="spacingAndGlyphs" fill="#000">28.5</text>
<text x="12.11" y="573.77" font-size="10.71" textLength="22.49" lengthAdjust="spacingAndGlyphs" fill="#000">29.0</text>
<text x="12.11" y="543.11" font-size="10.71" textLength="22.49" lengthAdjust="spacingAndGlyphs" fill="#000">29.5</text>
<text x="44.11" y="654.1" font-size="10.71" textLength="19.77" lengthAdjust="spacingAndGlyphs" fill="#000">12Z</text>
<text x="38.84" y="666.9" font-size="10.71" textLength="30.33" lengthAdjust="spacingAndGlyphs" fill="#000">25Apr</text>
<text x="120.38" y="654.1" font-size="10.71" textLength="19.77" lengthAdjust="spacingAndGlyphs" fill="#000">12Z</text>
<text x="115.11" y="666.9" font-size="10.71" textLength="30.33" lengthAdjust="spacingAndGlyphs" fill="#000">26Apr</text>
<text x="196.65" y="654.1" font-size="10.71" textLength="19.77" lengthAdjust="spacingAndGlyphs" fill="#000">12Z</text>
<text x="191.37" y="666.9" font-size="10.71" textLength="30.33" lengthAdjust="spacingAndGlyphs" fill="#000">27Apr</text>
<text x="272.92" y="654.1" font-size="10.71" textLength="19.77" lengthAdjust="spacingAndGlyphs" fill="#000">12Z</text>
<text x="267.64" y="666.9" font-size="10.71" textLength="30.33" lengthAdjust="spacingAndGlyphs" fill="#000">28Apr</text>
<text x="349.19" y="654.1" font-size="10.71" textLength="19.77" lengthAdjust="spacingAndGlyphs" fill="#000">12Z</text>
<text x="343.91" y="666.9" font-size="10.71" textLength="30.33" lengthAdjust="spacingAndGlyphs" fill="#000">29Apr</text>
<text x="425.45" y="654.1" font-size="10.71" textLength="19.77" lengthAdjust="spacingAndGlyphs" fill="#000">12Z</text>
<text x="420.18" y="666.9" font-size="10.71" textLength="30.33" lengthAdjust="spacingAndGlyphs" fill="#000">30Apr</text>
<text x="501.72" y="654.1" font-size="10.71" textLength="19.77" lengthAdjust="spacingAndGlyphs" fill="#000">12Z</text>
<text x="494.74" y="666.9" font-size="10.71" textLength="33.73" lengthAdjust="spacingAndGlyphs" fill="#000">01May</text>
<text x="577.99" y="654.1" font-size="10.71" textLength="19.77" lengthAdjust="spacingAndGlyphs" fill="#000">12Z</text>
<text x="571.01" y="666.9" font-size="10.71" textLength="33.73" lengthAdjust="spacingAndGlyphs" fill="#000">02May</text>
<text x="654.26" y="654.1" font-size="10.71" textLength="19.77" lengthAdjust="spacingAndGlyphs" fill="#000">12Z</text>
<text x="647.28" y="666.9" font-size="10.71" textLength="33.73" lengthAdjust="spacingAndGlyphs" fill="#000">03May</text>
<text x="730.53" y="654.1" font-size="10.71" textLength="19.77" lengthAdjust="spacingAndGlyphs" fill="#000">12Z</text>
<text x="723.55" y="666.9" font-size="10.71" textLength="33.73" lengthAdjust="spacingAndGlyphs" fill="#000">04May</text>
<text x="806.79" y="654.1" font-size="10.71" textLength="19.77" lengthAdjust="spacingAndGlyphs" fill="#000">12Z</text>
<text x="799.81" y="666.9" font-size="10.71" textLength="33.73" lengthAdjust="spacingAndGlyphs" fill="#000">05May</text>
</svg>
</body></html>
